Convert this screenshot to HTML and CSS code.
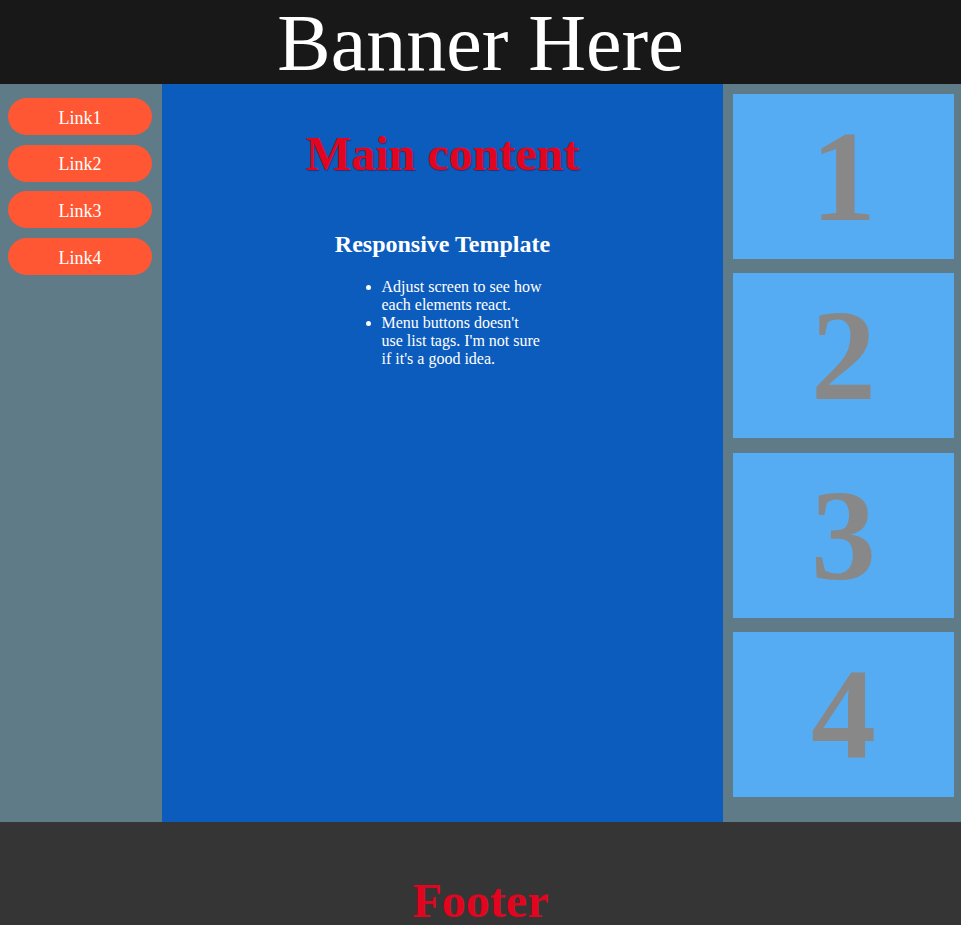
FILE: index.html
```html
<!DOCTYPE html>
<html>
<head>
<meta charset="utf-8">
<title>Responsive Template</title>
<link rel="stylesheet" href="styles.css">
</head>
<body>
<header class="banner">
  <h1 class="banner-title">Banner Here</h1>
</header>
<div class="layout">
  <nav class="menu">
    <a class="menu-btn" href="#">Link1</a>
    <a class="menu-btn" href="#">Link2</a>
    <a class="menu-btn" href="#">Link3</a>
    <a class="menu-btn" href="#">Link4</a>
  </nav>
  <main class="main">
    <h1 class="main-title">Main content</h1>
    <h2 class="sub-title">Responsive Template</h2>
    <ul class="notes">
      <li>Adjust screen to see how each elements react.</li>
      <li>Menu buttons doesn't use list tags. I'm not sure if it's a good idea.</li>
    </ul>
  </main>
  <aside class="side">
    <div class="tile">1</div>
    <div class="tile">2</div>
    <div class="tile">3</div>
    <div class="tile">4</div>
  </aside>
</div>
<footer class="footer">
  <h1 class="footer-title">Footer</h1>
</footer>
</body>
</html>
```

FILE: styles.css
```css
html, body {
  margin: 0;
  padding: 0;
}
body {
  font-family: "Liberation Serif", "Times New Roman", serif;
  font-size: 16px;
  background: #353535;
  overflow: hidden;
}
.banner {
  height: 84px;
  background: #181818;
  text-align: center;
}
.banner-title {
  margin: 0;
  font-size: 80px;
  font-weight: normal;
  line-height: 86px;
  color: #ffffff;
}
.layout {
  display: flex;
  height: 738px;
}
.menu {
  width: 162px;
  flex: none;
  background: #5f7b87;
  display: flex;
  flex-direction: column;
  padding: 14px 10px 0 8px;
  box-sizing: border-box;
  gap: 9.7px;
}
.menu-btn {
  display: flex;
  align-items: center;
  justify-content: center;
  height: 37px;
  padding-top: 3px;
  box-sizing: border-box;
  border-radius: 19px;
  background: #ff5733;
  color: #ffffff;
  font-size: 18px;
  text-decoration: none;
}
.main {
  width: 561px;
  flex: none;
  background: #0c5cbd;
  color: #ffffff;
  text-align: center;
}
.main-title {
  margin: 42px 0 0;
  font-size: 48px;
  font-weight: bold;
  color: #e1051f;
  text-shadow: 1px 1px 1px rgba(60, 0, 40, 0.45);
}
.sub-title {
  margin: 50px 0 0;
  font-size: 24px;
  font-weight: bold;
}
.notes {
  width: 162px;
  margin: 20px auto 0;
  padding-left: 40px;
  text-align: left;
  font-size: 16px;
  line-height: 18px;
}
.side {
  flex: 1;
  background: #5f7b87;
  padding: 10px 7px 0 10px;
  box-sizing: border-box;
  display: flex;
  flex-direction: column;
  gap: 14.4px;
}
.tile {
  height: 165px;
  flex: none;
  background: #56acf2;
  color: #888888;
  font-size: 130px;
  font-weight: bold;
  line-height: 165px;
  text-align: center;
}
.footer {
  height: 103px;
  padding-top: 51px;
  box-sizing: border-box;
  background: #353535;
  text-align: center;
}
.footer-title {
  margin: 0;
  font-size: 48px;
  font-weight: bold;
  color: #e1051f;
}
```
